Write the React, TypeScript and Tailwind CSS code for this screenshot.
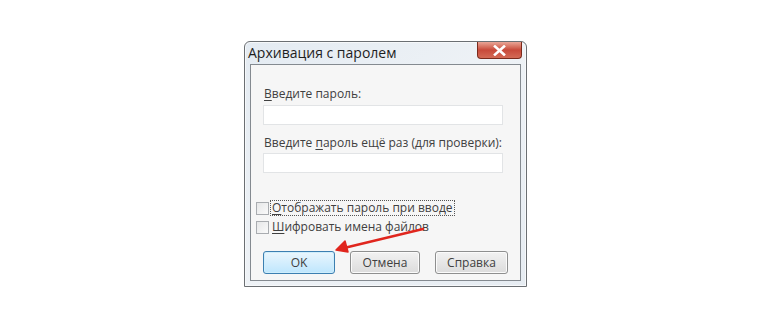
import React from 'react';

const font = { fontFamily: '"Open Sans", "Noto Sans", "DejaVu Sans", sans-serif' };

function Acc({ ch }: { ch: string }) {
  return <span className="underline underline-offset-2 decoration-1">{ch}</span>;
}

function Field() {
  return <div className="h-[20px] w-[240px] border border-[#e2e4e6] bg-white" />;
}

function Check({ children, focused = false }: { children: React.ReactNode; focused?: boolean }) {
  return (
    <div className="flex h-[14px] items-center gap-[2px]">
      <div className="h-[13px] w-[13px] border border-[#a9acb0] bg-gradient-to-br from-[#e6e7e8] to-[#fafafa]" />
      <span className={`px-[1px] leading-[14px] ${focused ? 'outline outline-1 outline-dotted outline-[#555]' : ''}`}>
        {children}
      </span>
    </div>
  );
}

function Btn({ label, w, primary = false }: { label: string; w: string; primary?: boolean }) {
  return (
    <div
      className={`flex h-[23px] items-center justify-center rounded-[3px] border ${w} ${
        primary
          ? 'border-[#3c7fb1] bg-gradient-to-b from-[#eaf6fd] to-[#bee6fd] shadow-[inset_0_0_0_1px_#cfeefc]'
          : 'border-[#8e8f8f] bg-gradient-to-b from-[#f2f2f2] to-[#dcdcdc] shadow-[inset_0_0_0_1px_#fbfbfb]'
      }`}
    >
      {label}
    </div>
  );
}

export default function App() {
  return (
    <div className="relative h-[330px] w-[770px] bg-white text-[12px] text-[#404040]" style={font}>
      <div className="pl-[244px] pt-[41px]">
        <div className="flex h-[246px] w-[283px] flex-col rounded-t-[6px] border border-[#6b6f73] bg-gradient-to-br from-[#e4ebf2] via-[#eef2f6] to-[#e6ecf2] shadow-[inset_0_0_0_1px_#f6f8fa]">
          {/* title bar */}
          <div className="flex h-[22px] items-start justify-between">
            <span className="pl-[3px] pt-[2px] text-[14px] leading-[18px] text-[#1e1e1e]">Архивация с паролем</span>
            <div className="mr-[4px] flex h-[17px] w-[45px] items-center justify-center rounded-b-[4px] border border-t-0 border-[#7a2a1c] bg-gradient-to-b from-[#e8a596] via-[#c8493a] to-[#d36a55]">
              <svg width="13" height="11" viewBox="0 0 13 11">
                <path d="M2 1.5 L11 9.5 M11 1.5 L2 9.5" stroke="#ffffff" strokeWidth="2.6" strokeLinecap="square" />
              </svg>
            </div>
          </div>
          {/* client area */}
          <div className="mb-[5px] ml-[5px] mr-[5px] flex flex-1 flex-col border border-[#848a90] bg-[#f6f6f6] pl-[12px] pt-[21px]">
            <div className="pl-[1px] leading-[16px]">
              <Acc ch="В" />ведите пароль:
            </div>
            <div className="mt-[3px]">
              <Field />
            </div>
            <div className="mt-[10px] pl-[1px] leading-[16px]">
              Введите <Acc ch="п" />ароль ещё раз (для проверки):
            </div>
            <div className="mt-[2px]">
              <Field />
            </div>
            <div className="-ml-[7px] mt-[28px] flex flex-col gap-[5px]">
              <Check focused>
                <Acc ch="О" />тображать пароль при вводе
              </Check>
              <Check>
                <Acc ch="Ш" />ифровать имена файлов
              </Check>
            </div>
            <div className="mt-[17px] flex gap-[15px]">
              <Btn label="OK" w="w-[72px]" primary />
              <Btn label="Отмена" w="w-[70px]" />
              <Btn label="Справка" w="w-[73px]" />
            </div>
          </div>
        </div>
      </div>
      {/* annotation arrow */}
      <svg className="absolute left-0 top-0" width="770" height="330" viewBox="0 0 770 330">
        <path d="M423 229 L344 248" stroke="#e0261e" strokeWidth="2.5" strokeLinecap="round" />
        <path d="M336 250 L345 241 L348 252 Z" fill="#e0261e" stroke="#e0261e" strokeWidth="1.5" strokeLinejoin="round" />
      </svg>
    </div>
  );
}
